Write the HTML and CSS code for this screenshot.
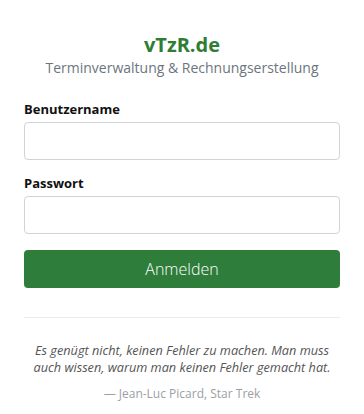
FILE: index.html
```html
<!DOCTYPE html>
<html lang="de">
<head>
<meta charset="utf-8">
<link rel="stylesheet" href="styles.css">
</head>
<body>
<main class="login">
  <header class="brand">
    <h1 class="brand-title">vTzR.de</h1>
    <p class="brand-sub">Terminverwaltung &amp; Rechnungserstellung</p>
  </header>
  <form class="form">
    <div class="field">
      <label class="label" for="u">Benutzername</label>
      <input class="input" id="u" type="text">
    </div>
    <div class="field">
      <label class="label" for="p">Passwort</label>
      <input class="input" id="p" type="password">
    </div>
    <button class="btn" type="button">Anmelden</button>
  </form>
  <hr class="divider">
  <blockquote class="quote">
    <p class="quote-text">Es genügt nicht, keinen Fehler zu machen. Man muss auch wissen, warum man keinen Fehler gemacht hat.</p>
    <p class="quote-src">— Jean-Luc Picard, Star Trek</p>
  </blockquote>
</main>
</body>
</html>
```

FILE: styles.css
```css
* { box-sizing: border-box; }
html, body { margin: 0; padding: 0; background: #fff; }
body {
  font-family: "Open Sans", "Noto Sans", "DejaVu Sans", sans-serif;
  color: #212529;
}
.login {
  padding: 32px 24px 0;
  display: flex;
  flex-direction: column;
}
.brand { text-align: center; }
.brand-title {
  margin: 0;
  font-size: 20px;
  line-height: 26px;
  font-weight: 700;
  color: #2e7d32;
}
.brand-sub {
  margin: 0;
  font-size: 14px;
  line-height: 20px;
  color: #6c757d;
}
.form {
  margin-top: 22px;
  display: flex;
  flex-direction: column;
}
.field {
  display: flex;
  flex-direction: column;
  margin-bottom: 14px;
}
.label {
  font-size: 13px;
  line-height: 18px;
  font-weight: 700;
  color: #111;
  margin-bottom: 4px;
}
.input {
  height: 38px;
  border: 1px solid #cfd4d9;
  border-radius: 4px;
  padding: 6px 12px;
  font: inherit;
}
.btn {
  margin-top: 2px;
  height: 38px;
  border: none;
  border-radius: 4px;
  background: #2e7d3a;
  color: #fff;
  font-family: inherit;
  font-size: 16px;
  font-weight: 300;
}
.divider {
  margin: 29px 0 0;
  border: 0;
  border-top: 1px solid #e9ecef;
}
.quote {
  margin: 24px 0 0;
  text-align: center;
}
.quote-text {
  margin: 0;
  font-style: italic;
  font-size: 12.7px;
  line-height: 17px;
  color: #555;
}
.quote-src {
  margin: 9px 0 0;
  font-size: 12px;
  line-height: 18px;
  color: #9aa0a6;
}
```
